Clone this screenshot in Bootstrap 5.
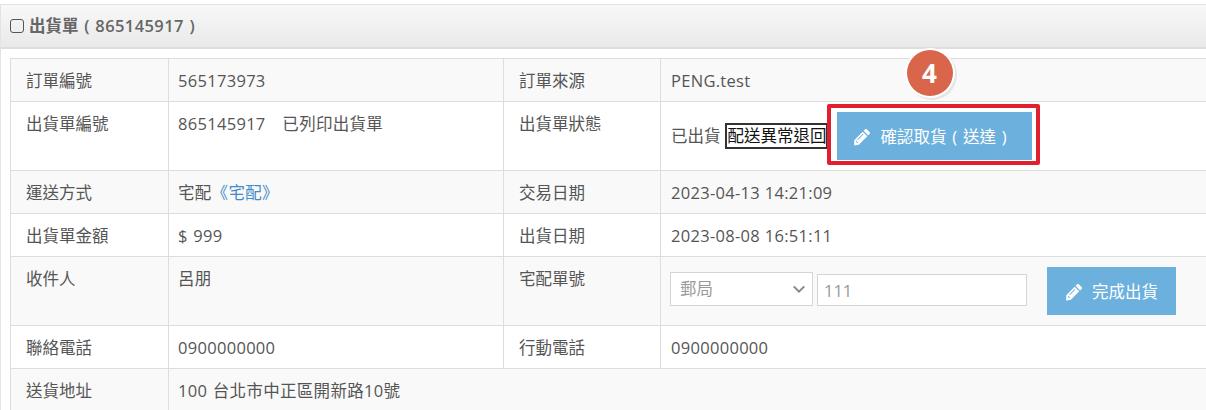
<!DOCTYPE html>
<html lang="zh-Hant">
<head>
    <meta charset="UTF-8">
    <meta name="viewport" content="width=device-width, initial-scale=1.0">
    <title>出貨單</title>
    <link href="https://cdn.jsdelivr.net/npm/bootstrap@5.3.0/dist/css/bootstrap.min.css" rel="stylesheet">
    <style>
        html, body { overflow: hidden; }
        body {
            background: #fff;
            color: #555;
            font-family: "Open Sans", "Noto Sans CJK TC", sans-serif;
            font-size: 16.5px;
            padding-top: 4px;
        }
        .ship-panel {
            width: 1260px;
            border: 1px solid #e3e3e3;
            border-right: 0;
            border-bottom: 0;
        }
        .ship-head {
            height: 44px;
            padding: 0 9px;
            background: linear-gradient(#f8f8f8, #e9e9e9);
            border-bottom: 2px solid #dedede;
            color: #666;
            font-weight: 600;
        }
        .ship-title { word-spacing: 1.5px; }
        .ship-title span { letter-spacing: .4px; }
        .ship-check {
            width: 14px;
            height: 14px;
            border: 1px solid #555;
            border-radius: 3px;
            margin-right: 5px;
        }
        .ship-body { padding: 9px 0 0 9px; }
        .ship-table {
            width: 1250px;
            table-layout: fixed;
            margin: 0;
            border-color: #ddd;
            --bs-table-color: #555;
            --bs-table-bg: transparent;
        }
        .ship-table td {
            padding: 11px 15px 9px;
            line-height: 22px;
            vertical-align: top;
            color: #555;
            box-shadow: none;
        }
        .ship-table tr.row-alt td { background: #f9f9f9; }
        .ship-table td.cell-val { padding-left: 9px; letter-spacing: .3px; word-spacing: 1px; }
        .ship-table td.cell-mid { padding: 10px 10px; }
        .ship-table td.cell-text { padding-top: 11px; padding-bottom: 9px; letter-spacing: .3px; }
        .ship-table a { color: #428bca; text-decoration: none; }
        .status-tag {
            border: 2px solid #333;
            background: #fff;
            color: #111;
            padding: 0 0 0 1px;
            line-height: 22px;
            width: 103px;
            white-space: nowrap;
            overflow: hidden;
        }
        .act-btn {
            --bs-btn-bg: #6cb0de;
            --bs-btn-border-color: #6cb0de;
            --bs-btn-color: #fff;
            --bs-btn-hover-bg: #6cb0de;
            --bs-btn-hover-border-color: #6cb0de;
            --bs-btn-hover-color: #fff;
            border-radius: 0;
            height: 48px;
            padding-top: 8px;
            font-size: 16.5px;
            color: #fff;
        }
        .act-btn svg { width: 18px; height: 18px; fill: #fff; margin-right: 9px; }
        .btn-pick { width: 195px; word-spacing: 1.5px; padding-right: 20px; }
        .btn-done { width: 129px; margin-left: 20px; }
        .pick-wrap { margin-left: 9px; }
        .red-frame {
            position: absolute;
            top: -8px;
            left: -10px;
            width: 213px;
            height: 61px;
            border: 4px solid #e0202f;
            border-radius: 2px;
            pointer-events: none;
        }
        .step-dot {
            position: absolute;
            top: -62px;
            left: 70px;
            width: 46px;
            height: 46px;
            border-radius: 50%;
            background: #d9654a;
            color: #fff;
            font-weight: 700;
            font-size: 26px;
            box-shadow: 0 0 0 2px #fff, 2px 2px 0 2px #e6e6e6;
        }
        .ship-select, .ship-input {
            border: 1px solid #d5d5d5;
            border-radius: 0;
            color: #999;
            font-size: 16.5px;
            background-color: #fff;
            box-shadow: none;
        }
        .ship-select {
            width: 143px;
            height: 34px;
            padding: 0 30px 0 9px;
            margin-right: 4px;
            background-image: url("data:image/svg+xml,%3csvg xmlns='http://www.w3.org/2000/svg' viewBox='0 0 16 16'%3e%3cpath fill='none' stroke='%23888' stroke-width='2.4' d='M2 5l6 6 6-6'/%3e%3c/svg%3e");
            background-position: right 6px center;
            background-size: 14px 14px;
        }
        .ship-input {
            width: 210px;
            height: 32px;
            padding: 0 6px;
            align-self: flex-end;
        }
        .ship-form { height: 48px; margin-left: -1px; }
        .ship-fields { align-items: stretch; height: 34px; margin-top: 5px; }
    </style>
</head>
<body>
    <div class="ship-panel">
        <div class="ship-head d-flex align-items-center">
            <span class="ship-check"></span>
            <div class="ship-title">出貨單 ( <span>865145917</span> )</div>
        </div>
        <div class="ship-body">
            <table class="table table-bordered ship-table">
                <colgroup>
                    <col style="width: 158px">
                    <col style="width: 335px">
                    <col style="width: 157px">
                    <col>
                </colgroup>
                <tbody>
                    <tr class="row-alt">
                        <td>訂單編號</td>
                        <td class="cell-val">565173973</td>
                        <td>訂單來源</td>
                        <td class="cell-mid cell-text">PENG.test</td>
                    </tr>
                    <tr>
                        <td>出貨單編號</td>
                        <td class="cell-val">865145917 &nbsp; 已列印出貨單</td>
                        <td>出貨單狀態</td>
                        <td class="cell-mid">
                            <div class="d-flex align-items-center">
                                <span class="me-1">已出貨</span>
                                <span class="status-tag">配送異常退回</span>
                                <div class="pick-wrap position-relative">
                                    <button type="button" class="btn act-btn btn-pick d-flex align-items-center justify-content-center">
                                        <svg viewBox="0 0 16 16"><path d="M12.2 1.1 14.9 3.8a1 1 0 0 1 0 1.4L13.5 6.6 9.4 2.5 10.8 1.1a1 1 0 0 1 1.4 0zM8.6 3.3 12.7 7.4 5.2 14.9 1 15.6 1.1 10.8zM3 11.4 2.6 12.2 3.8 13.4 4.6 13zM8.8 5.2 3.9 10.1 4.4 10.6 9.3 5.7z" fill-rule="evenodd"/></svg>
                                        確認取貨 ( 送達 )
                                    </button>
                                    <span class="red-frame"></span>
                                    <span class="step-dot d-flex align-items-center justify-content-center">4</span>
                                </div>
                            </div>
                        </td>
                    </tr>
                    <tr class="row-alt">
                        <td>運送方式</td>
                        <td class="cell-val">宅配<a href="#">《宅配》</a></td>
                        <td>交易日期</td>
                        <td class="cell-mid cell-text">2023-04-13 14:21:09</td>
                    </tr>
                    <tr>
                        <td>出貨單金額</td>
                        <td class="cell-val">$ 999</td>
                        <td>出貨日期</td>
                        <td class="cell-mid cell-text">2023-08-08 16:51:11</td>
                    </tr>
                    <tr class="row-alt">
                        <td>收件人</td>
                        <td class="cell-val">呂朋</td>
                        <td>宅配單號</td>
                        <td class="cell-mid">
                            <div class="d-flex align-items-start ship-form">
                                <div class="d-flex ship-fields">
                                    <select class="form-select ship-select">
                                        <option>郵局</option>
                                    </select>
                                    <input type="text" class="form-control ship-input" value="111">
                                </div>
                                <button type="button" class="btn act-btn btn-done d-flex align-items-center justify-content-center">
                                    <svg viewBox="0 0 16 16"><path d="M12.2 1.1 14.9 3.8a1 1 0 0 1 0 1.4L13.5 6.6 9.4 2.5 10.8 1.1a1 1 0 0 1 1.4 0zM8.6 3.3 12.7 7.4 5.2 14.9 1 15.6 1.1 10.8zM3 11.4 2.6 12.2 3.8 13.4 4.6 13zM8.8 5.2 3.9 10.1 4.4 10.6 9.3 5.7z" fill-rule="evenodd"/></svg>
                                    完成出貨
                                </button>
                            </div>
                        </td>
                    </tr>
                    <tr>
                        <td>聯絡電話</td>
                        <td class="cell-val">0900000000</td>
                        <td>行動電話</td>
                        <td class="cell-mid cell-text">0900000000</td>
                    </tr>
                    <tr class="row-alt">
                        <td>送貨地址</td>
                        <td class="cell-val" colspan="3">100 台北市中正區開新路10號</td>
                    </tr>
                </tbody>
            </table>
        </div>
    </div>
    <script src="https://cdn.jsdelivr.net/npm/bootstrap@5.3.0/dist/js/bootstrap.bundle.min.js"></script>
</body>
</html>
